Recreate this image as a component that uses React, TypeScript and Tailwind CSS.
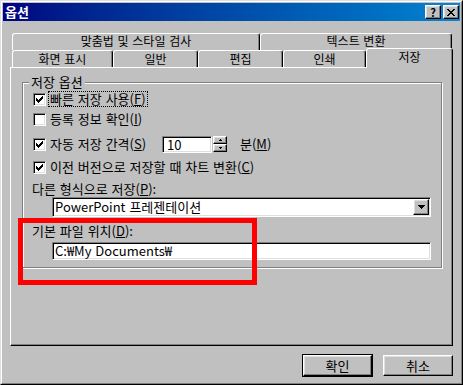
const raised =
  "border border-t-white border-l-white border-r-black border-b-black shadow-[inset_-1px_-1px_0_#808080,inset_1px_1px_0_#dfdfdf]";
const sunken =
  "border border-t-[#808080] border-l-[#808080] border-r-white border-b-white shadow-[inset_1px_1px_0_#000,inset_-1px_-1px_0_#dfdfdf]";

function Px({ d, w, h }: { d: string; w: number; h: number }) {
  return (
    <svg width={w} height={h} viewBox={`0 0 ${w} ${h}`} shapeRendering="crispEdges">
      <path d={d} fill="#000" />
    </svg>
  );
}

const checkPath =
  "M6 0h1v1h-1z M5 1h2v1h-2z M0 2h1v1h-1z M4 2h3v1h-3z M0 3h2v1h-2z M3 3h3v1h-3z M0 4h5v1h-5z M1 5h3v1h-3z M2 6h1v1h-1z";
const closePath =
  "M0 0h2v1h-2z M6 0h2v1h-2z M1 1h2v1h-2z M5 1h2v1h-2z M2 2h4v1h-4z M3 3h2v1h-2z M2 4h4v1h-4z M1 5h2v1h-2z M5 5h2v1h-2z M0 6h2v1h-2z M6 6h2v1h-2z";
const downPath = "M0 0h7v1h-7z M1 1h5v1h-5z M2 2h3v1h-3z M3 3h1v1h-1z";

function Checkbox({ checked }: { checked?: boolean }) {
  return (
    <span className={`ml-[1px] flex h-[13px] w-[13px] shrink-0 items-center justify-center bg-white ${sunken}`}>
      {checked && <Px d={checkPath} w={7} h={7} />}
    </span>
  );
}

function Mn({ children }: { children: string }) {
  return <span className="underline underline-offset-[1px]">{children}</span>;
}

const backTabs = [
  { label: "맞춤법 및 스타일 검사", w: "w-[248px]" },
  { label: "텍스트 변환", w: "w-[192px]" },
];

const frontTabs = [
  { label: "화면 표시", w: "w-[101px]" },
  { label: "일반", w: "w-[85px]" },
  { label: "편집", w: "w-[85px]" },
  { label: "인쇄", w: "w-[83px]" },
];

export default function App() {
  return (
    <div className="relative h-[385px] w-[463px] border border-t-[#dfdfdf] border-l-[#dfdfdf] border-r-black border-b-black bg-[#c0c0c0] font-['Noto_Sans_CJK_KR',sans-serif] text-[13px] leading-[14px] text-black [word-spacing:1px]">
      <div className="flex h-full flex-col border border-t-white border-l-white border-r-[#808080] border-b-[#808080] p-px">
        {/* title bar */}
        <div className="flex h-[18px] items-center bg-gradient-to-r from-[#000080] to-[#1084d0] pl-[2px] pr-[1px]">
          <span className="font-bold text-white">옵션</span>
          <div className="ml-auto flex gap-[2px]">
            <span className={`flex h-[14px] w-[16px] items-center justify-center bg-[#c0c0c0] text-[11px] font-bold leading-none ${raised}`}>
              ?
            </span>
            <span className={`flex h-[14px] w-[16px] items-center justify-center bg-[#c0c0c0] ${raised}`}>
              <Px d={closePath} w={8} h={7} />
            </span>
          </div>
        </div>

        <div className="pl-[7px] pt-[12px]">
          {/* back row of tabs */}
          <div className="flex h-[17px] pl-[2px] text-[12px]">
            {backTabs.map((t) => (
              <div
                key={t.label}
                className={`${t.w} h-[17px] rounded-t-[3px] border-t border-l border-r border-t-white border-l-white border-r-black text-center shadow-[inset_-1px_0_0_#808080]`}
              >
                {t.label}
              </div>
            ))}
          </div>
          {/* front row of tabs */}
          <div className="flex h-[17px] items-end pl-[2px] text-[12px]">
            {frontTabs.map((t) => (
              <div
                key={t.label}
                className={`${t.w} h-[17px] rounded-t-[3px] border-t border-l border-r border-t-white border-l-white border-r-black pt-px text-center shadow-[inset_-1px_0_0_#808080]`}
              >
                {t.label}
              </div>
            ))}
            <div className="relative z-10 -mb-px h-[20px] w-[87px] rounded-t-[3px] border-t border-l border-r border-t-white border-l-white border-r-black bg-[#c0c0c0] pt-px text-center shadow-[inset_-1px_0_0_#808080]">
              저장
            </div>
          </div>

          {/* tab panel */}
          <div className="h-[279px] w-[443px] border border-t-white border-l-white border-r-black border-b-black pl-[11px] pt-[14px] shadow-[inset_-1px_-1px_0_#808080]">
            <div className="h-[186px] w-[420px] border border-[#808080] pl-[9px] shadow-[inset_1px_1px_0_#fff,1px_1px_0_#fff]">
              <div className="-ml-[3px] -mt-[8px] h-[14px] w-fit bg-[#c0c0c0] px-[2px]">저장 옵션</div>

              <div className="flex h-[20px] items-center">
                <Checkbox checked />
                <span className="ml-[2px] border border-dotted border-black px-px">
                  빠른 저장 사용(<Mn>F</Mn>)
                </span>
              </div>
              <div className="flex h-[20px] items-center">
                <Checkbox />
                <span className="ml-[4px]">
                  등록 정보 확인(<Mn>I</Mn>)
                </span>
              </div>
              <div className="mt-[5px] flex h-[20px] items-center">
                <Checkbox checked />
                <span className="ml-[4px] w-[112px]">
                  자동 저장 간격(<Mn>S</Mn>)
                </span>
                <div className={`h-[17px] w-[50px] bg-white pl-[4px] pt-px ${sunken}`}>10</div>
                <div className="ml-[1px] flex h-[16px] w-[14px] flex-col">
                  <div className={`flex h-[8px] items-center justify-center bg-[#c0c0c0] ${raised}`}>
                    <Px d="M1 0h1v1h-1z M0 1h3v1h-3z" w={3} h={2} />
                  </div>
                  <div className={`flex h-[8px] items-center justify-center bg-[#c0c0c0] ${raised}`}>
                    <Px d="M0 0h3v1h-3z M1 1h1v1h-1z" w={3} h={2} />
                  </div>
                </div>
                <span className="ml-[13px]">
                  분(<Mn>M</Mn>)
                </span>
              </div>
              <div className="mt-[3px] flex h-[20px] items-center">
                <Checkbox checked />
                <span className="ml-[4px]">
                  이전 버전으로 저장할 때 차트 변환(<Mn>C</Mn>)
                </span>
              </div>

              <div className="mt-[5px] h-[14px]">
                다른 형식으로 저장(<Mn>P</Mn>):
              </div>
              <div className={`ml-[20px] mt-px flex h-[20px] w-[379px] items-center bg-white pl-[2px] pr-[1px] ${sunken}`}>
                <span className="flex-1">PowerPoint 프레젠테이션</span>
                <span className={`flex h-[16px] w-[16px] items-center justify-center bg-[#c0c0c0] ${raised}`}>
                  <Px d={downPath} w={7} h={4} />
                </span>
              </div>

              <div className="mt-[7px] h-[14px]">
                기본 파일 위치(<Mn>D</Mn>):
              </div>
              <div className={`ml-[20px] mt-[4px] flex h-[18px] w-[379px] items-center bg-white pl-[2px] ${sunken}`}>
                C:₩My Documents₩
              </div>
            </div>
          </div>

          {/* buttons */}
          <div className="mt-[8px] flex w-[443px] items-center justify-end gap-[10px]">
            <div className="h-[23px] w-[71px] border border-black">
              <div className={`flex h-full items-center justify-center bg-[#c0c0c0] ${raised}`}>확인</div>
            </div>
            <div className={`flex h-[21px] w-[70px] items-center justify-center bg-[#c0c0c0] ${raised}`}>취소</div>
          </div>
        </div>
      </div>

      {/* red annotation frame */}
      <div className="absolute left-[17px] top-[217px] h-[67px] w-[239px] border-[5px] border-[#ff0000]" />
    </div>
  );
}
